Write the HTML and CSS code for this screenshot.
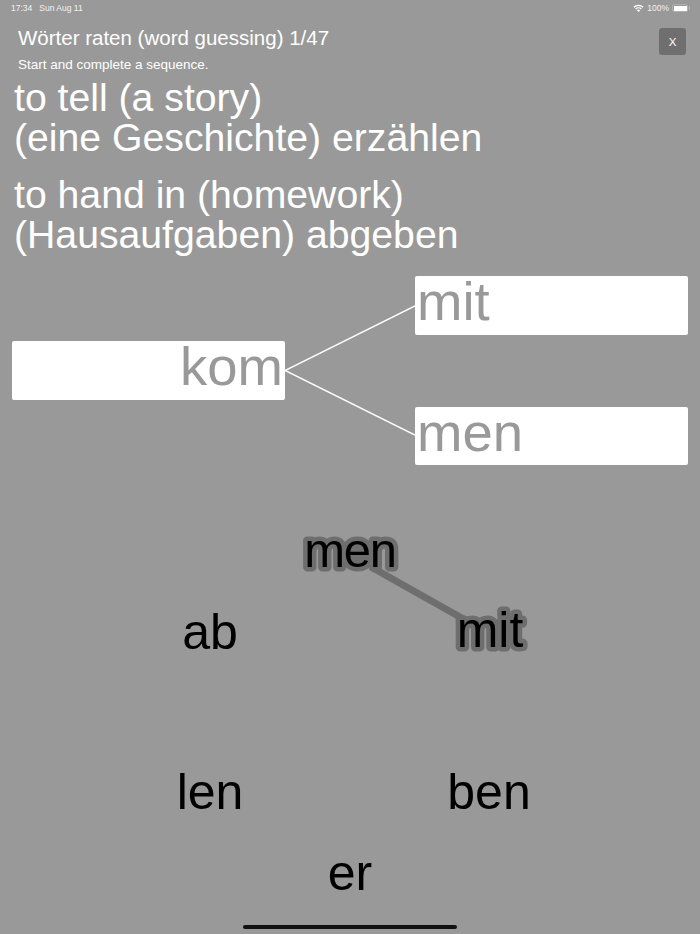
FILE: index.html
```html
<!DOCTYPE html>
<html lang="de">
<head>
    <meta charset="UTF-8">
    <meta name="viewport" content="width=device-width, initial-scale=1.0">
    <title>Wörter raten</title>
    <link rel="stylesheet" href="styles.css">
</head>
<body>
    <div class="status-bar">
        <span class="status-time">17:34</span>
        <span class="status-date">Sun Aug 11</span>
        <span class="status-right">
            <svg class="wifi" width="11" height="8" viewBox="0 0 12 9">
                <path d="M0.3 3.1 A8 8 0 0 1 11.7 3.1 L10.6 4.3 A6.4 6.4 0 0 0 1.4 4.3 Z" fill="#fff"/>
                <path d="M2.3 5.1 A5.2 5.2 0 0 1 9.7 5.1 L8.6 6.2 A3.6 3.6 0 0 0 3.4 6.2 Z" fill="#fff"/>
                <path d="M4.2 7 A2.5 2.5 0 0 1 7.8 7 L6 8.9 Z" fill="#fff"/>
            </svg>
            <span>100%</span>
            <span class="battery"><span class="battery-fill"></span></span>
        </span>
    </div>

    <div class="header">
        <div class="header-text">
            <div class="title">Wörter raten (word guessing) 1/47</div>
            <div class="subtitle">Start and complete a sequence.</div>
        </div>
        <button class="close-btn">X</button>
    </div>

    <div class="prompts">
        <p class="prompt">to tell (a story)<br>(eine Geschichte) erzählen</p>
        <p class="prompt">to hand in (homework)<br>(Hausaufgaben) abgeben</p>
    </div>

    <div class="tree">
        <div class="slot slot-root">kom</div>
        <svg class="branches" width="130" height="189" viewBox="0 0 130 189">
            <line x1="0" y1="94.5" x2="130" y2="30" stroke="#fff" stroke-width="1.5"/>
            <line x1="0" y1="94.5" x2="130" y2="159" stroke="#fff" stroke-width="1.5"/>
        </svg>
        <div class="slot-column">
            <div class="slot">mit</div>
            <div class="slot">men</div>
        </div>
    </div>

    <!-- free canvas: the words sit where the game dropped them -->
    <svg class="word-field" width="700" height="470" viewBox="0 0 700 470">
        <line class="trace" x1="372" y1="103.5" x2="467" y2="157"/>
        <text class="word picked word-tight" x="350" y="103">men</text>
        <text class="word" x="210" y="185">ab</text>
        <text class="word picked" x="490" y="183">mit</text>
        <text class="word" x="210" y="345">len</text>
        <text class="word" x="489" y="345">ben</text>
        <text class="word" x="350" y="426">er</text>
    </svg>

    <div class="home-indicator"></div>
</body>
</html>
```

FILE: styles.css
```css
html, body {
    margin: 0;
    height: 100%;
}
body {
    position: relative;
    width: 700px;
    height: 934px;
    overflow: hidden;
    background-color: #999999;
    color: #fff;
    font-family: "Liberation Sans", Arial, sans-serif;
}

/* status bar */
.status-bar {
    display: flex;
    align-items: center;
    height: 16px;
    padding: 0 12px 0 11px;
    font-size: 8.5px;
    color: #f2f2f2;
}
.status-date {
    margin-left: 7px;
}
.status-right {
    display: flex;
    align-items: center;
    gap: 3px;
    margin-left: auto;
}
.battery {
    position: relative;
    display: block;
    width: 16px;
    height: 8px;
    padding: 0.5px;
    box-sizing: border-box;
    border: 1px solid #b0b0b0;
    border-radius: 2px;
}
.battery::after {
    content: "";
    position: absolute;
    right: -3px;
    top: 1px;
    width: 1px;
    height: 4px;
    background-color: #b0b0b0;
}
.battery-fill {
    display: block;
    height: 100%;
    background-color: #fff;
}

/* header */
.header {
    display: flex;
    justify-content: space-between;
    padding: 10px 14px 0 18px;
}
.title {
    font-size: 20.5px;
    line-height: 23px;
}
.subtitle {
    margin-top: 9px;
    font-size: 13.5px;
    line-height: 14px;
}
.close-btn {
    width: 27px;
    height: 27px;
    margin-top: 2px;
    padding: 0;
    border: none;
    border-radius: 3px;
    background-color: #6f6f6f;
    color: #fff;
    font-family: inherit;
    font-size: 11.5px;
}

/* prompts */
.prompts {
    padding: 0 14px;
    margin-top: 6px;
}
.prompt {
    margin: 0 0 18px;
    font-size: 39.2px;
    line-height: 39.5px;
}

/* tree */
.tree {
    display: grid;
    grid-template-columns: 273px 130px 273px;
    align-items: center;
    height: 189px;
    margin-top: 22px;
    padding: 0 12px;
}
.slot {
    height: 58.5px;
    border-radius: 2px;
    background-color: #fff;
    color: #999999;
    font-size: 54.5px;
    line-height: 52px;
    padding-left: 2px;
}
.slot-root {
    text-align: right;
    padding: 0 2px 0 0;
}
.slot-column {
    display: flex;
    flex-direction: column;
    justify-content: space-between;
    height: 189px;
}
.branches {
    display: block;
}

/* word field */
.word-field {
    position: absolute;
    left: 0;
    top: 464px;
}
.trace {
    stroke: #6e6e6e;
    stroke-width: 7;
}
.word {
    fill: #000;
    font-size: 50px;
    text-anchor: middle;
}
.picked {
    stroke: #6e6e6e;
    stroke-width: 9;
    stroke-linejoin: round;
    paint-order: stroke fill;
}
.word-tight {
    font-size: 49px;
    letter-spacing: -1.2px;
}

.home-indicator {
    position: absolute;
    left: 243px;
    bottom: 5px;
    width: 214px;
    height: 4.5px;
    border-radius: 2px;
    background-color: #111;
}
```
